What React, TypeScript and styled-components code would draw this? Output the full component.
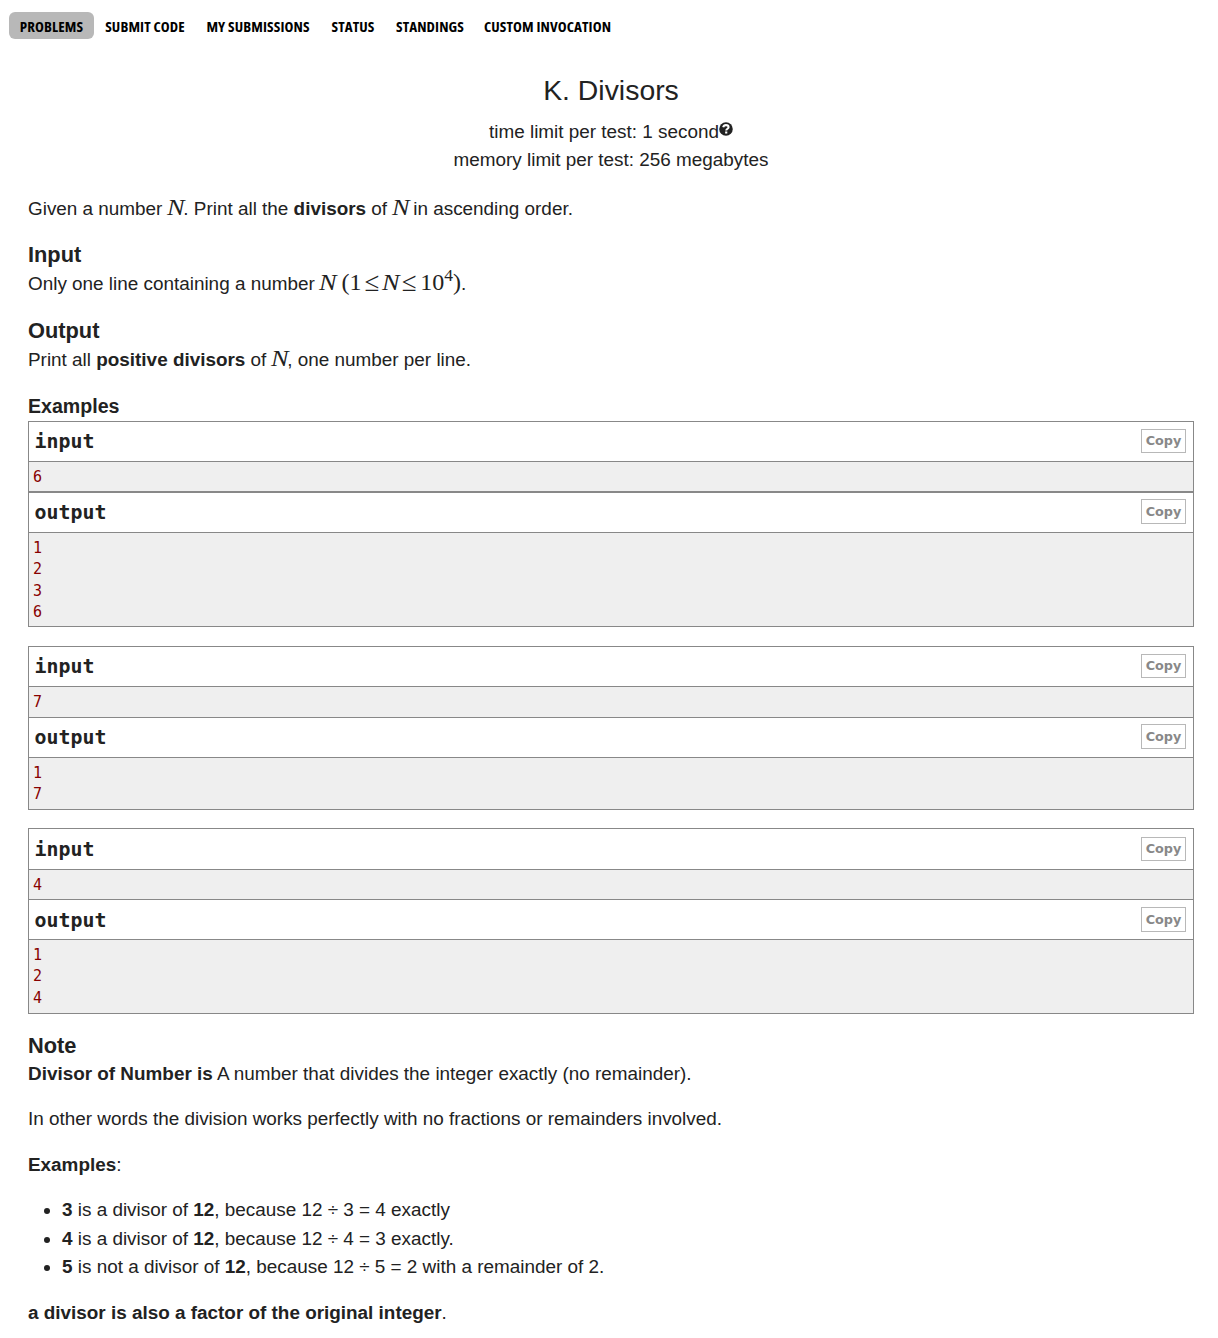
import React from "react";
import styled, { createGlobalStyle } from "styled-components";

const GlobalStyle = createGlobalStyle`
  * { box-sizing: border-box; }
  body {
    margin: 0;
    background: #fff;
    color: #222;
    font-family: "Liberation Sans", Arial, sans-serif;
    font-size: 18.9px;
    line-height: 28.5px;
  }
`;

const Page = styled.div`
  height: 1338px;
  overflow: hidden;
`;

const Nav = styled.nav`
  display: flex;
  padding: 12px 0 0 9px;
  height: 69px;
`;

const NavItem = styled.a<{ $active?: boolean; $width: number }>`
  display: flex;
  justify-content: center;
  align-items: center;
  width: ${(p) => p.$width}px;
  height: 27px;
  padding-top: 2px;
  border-radius: 6px;
  background: ${(p) => (p.$active ? "#b8b8b8" : "transparent")};
  color: #000;
  font: 700 15px/21px "Open Sans", sans-serif;
  font-stretch: 75%;
  letter-spacing: 0.1px;
  white-space: nowrap;
`;

const Statement = styled.main`
  padding: 0 24px 0 28px;
`;

const Header = styled.header`
  text-align: center;
  height: 125.5px;
`;

const Title = styled.h1`
  margin: 0 0 6px;
  font-size: 28.4px;
  font-weight: 400;
  line-height: 43px;
`;

const Line = styled.div`
  height: 28px;
`;

const Help = styled.svg`
  width: 14px;
  height: 14px;
  vertical-align: 2.5px;
`;

const Para = styled.p`
  margin: 0 0 17px;
  height: 28.5px;
  white-space: nowrap;
`;

const Heading = styled.h2<{ $size?: number; $height?: number }>`
  margin: 0;
  font-size: ${(p) => p.$size ?? 21.8}px;
  line-height: 30px;
  height: ${(p) => p.$height ?? 30}px;
`;

const Formula = styled.span`
  font: 24px/1 "Liberation Serif", serif;
`;

const Variable = styled.i`
  display: inline-block;
  width: 16.2px;
  margin-left: -0.5px;
  transform: scaleX(1.1);
  transform-origin: left;
`;

const Group = styled.span`
  margin-left: 5.8px;
`;

const Relation = styled.span`
  margin: 0 3.7px 0 3px;
  font-size: 27px;
  line-height: 0;
  vertical-align: -1px;
`;

const Sup = styled.sup`
  font-size: 17.5px;
  line-height: 0;
  vertical-align: 9px;
`;

const Sample = styled.section<{ $gap: number }>`
  border: 1px solid #888;
  margin-bottom: ${(p) => p.$gap}px;
`;

const CellHead = styled.div<{ $height: number; $rule?: number; $shift: number }>`
  display: flex;
  justify-content: space-between;
  align-items: flex-start;
  height: ${(p) => p.$height}px;
  padding: ${(p) => p.$shift}px 7px 0 5.5px;
  border-top: ${(p) => p.$rule ?? 0}px solid #888;
  border-bottom: 1px solid #888;
  font: 700 19.9px/39px "DejaVu Sans Mono", monospace;
`;

const Copy = styled.button<{ $low?: boolean }>`
  width: 45px;
  height: ${(p) => (p.$low ? 24 : 25)}px;
  margin-top: ${(p) => (p.$low ? 7 : 6)}px;
  padding: 0;
  border: 1px solid #b8b8b8;
  background: #fff;
  color: #888;
  font: 700 12.8px/22px "DejaVu Sans", sans-serif;
`;

const Data = styled.pre<{ $height: number }>`
  margin: 0;
  height: ${(p) => p.$height}px;
  padding: 5px 4px 0;
  background: #efefef;
  color: #800;
  font: 15px/21.25px "DejaVu Sans Mono", monospace;
`;

const List = styled.ul`
  margin: 0 0 17px;
  padding: 0 0 0 34px;
  line-height: 28.5px;
`;

const nav = [
  { label: "PROBLEMS", width: 85 },
  { label: "SUBMIT CODE", width: 102 },
  { label: "MY SUBMISSIONS", width: 124 },
  { label: "STATUS", width: 66 },
  { label: "STANDINGS", width: 88 },
  { label: "CUSTOM INVOCATION", width: 147 },
];

const samples = [
  { input: "6", output: "1\n2\n3\n6", head: 40, inH: 29, rule: 2, outH: 93, gap: 19, shift: 0 },
  { input: "7", output: "1\n7", head: 40, inH: 30, rule: 1, outH: 51, gap: 18, shift: 0 },
  { input: "4", output: "1\n2\n4", head: 41, inH: 29, rule: 1, outH: 73, gap: 16.5, shift: 1 },
];

export default function App() {
  return (
    <Page>
      <GlobalStyle />
      <Nav>
        {nav.map((n, i) => (
          <NavItem key={n.label} $active={i === 0} $width={n.width}>
            {n.label}
          </NavItem>
        ))}
      </Nav>
      <Statement>
        <Header>
          <Title>K. Divisors</Title>
          <Line>
            time limit per test: 1 second
            <Help viewBox="0 0 13 13">
              <circle cx="6.5" cy="6.5" r="6.3" fill="#222" />
              <path d="M3.900 4.900C4.200 3.500 5.200 2.900 6.500 2.900c1.500 0 2.400.800 2.400 1.900C8.900 6.300 6.700 6.200 6.700 8" fill="none" stroke="#fff" strokeWidth="1.900" />
              <rect x="5.700" y="8.800" width="2" height="1.900" fill="#fff" />
            </Help>
          </Line>
          <Line>memory limit per test: 256 megabytes</Line>
        </Header>
        <Para>
          Given a number <Formula><Variable>N</Variable></Formula>. Print all the <b>divisors</b> of{" "}
          <Formula><Variable>N</Variable></Formula> in ascending order.
        </Para>
        <Heading>Input</Heading>
        <Para>
          Only one line containing a number{" "}
          <Formula>
            <Variable>N</Variable>
            <Group>(1</Group>
            <Relation>≤</Relation>
            <Variable>N</Variable>
            <Relation>≤</Relation>
            10<Sup>4</Sup>)
          </Formula>.
        </Para>
        <Heading>Output</Heading>
        <Para>
          Print all <b>positive divisors</b> of <Formula><Variable>N</Variable></Formula>, one number per line.
        </Para>
        <Heading $size={19.6}>Examples</Heading>
        {samples.map((s) => (
          <Sample key={s.input} $gap={s.gap}>
            <CellHead $height={s.head} $shift={s.shift}>input<Copy $low>Copy</Copy></CellHead>
            <Data $height={s.inH}>{s.input}</Data>
            <CellHead $height={40 + s.rule} $rule={s.rule} $shift={s.shift}>output<Copy>Copy</Copy></CellHead>
            <Data $height={s.outH}>{s.output}</Data>
          </Sample>
        ))}
        <Heading $height={29}>Note</Heading>
        <Para><b>Divisor of Number is</b> A number that divides the integer exactly (no remainder).</Para>
        <Para>In other words the division works perfectly with no fractions or remainders involved.</Para>
        <Para><b>Examples</b>:</Para>
        <List>
          <li><b>3</b> is a divisor of <b>12</b>, because 12 ÷ 3 = 4 exactly</li>
          <li><b>4</b> is a divisor of <b>12</b>, because 12 ÷ 4 = 3 exactly.</li>
          <li><b>5</b> is not a divisor of <b>12</b>, because 12 ÷ 5 = 2 with a remainder of 2.</li>
        </List>
        <Para><b>a divisor is also a factor of the original integer</b>.</Para>
      </Statement>
    </Page>
  );
}
